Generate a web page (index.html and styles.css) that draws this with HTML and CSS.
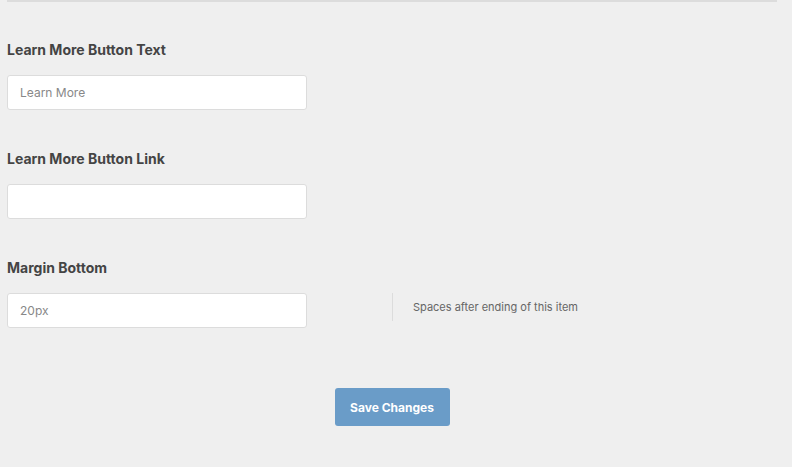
FILE: index.html
```html
<!DOCTYPE html>
<html lang="en">
<head>
  <title>Item Settings</title>
  <link rel="stylesheet" href="styles.css">
</head>
<body>
  <div class="settings">
    <div class="field">
      <label class="field-label" for="btnText">Learn More Button Text</label>
      <div class="field-row">
        <input id="btnText" class="field-input" type="text" placeholder="Learn More">
      </div>
    </div>

    <div class="field">
      <label class="field-label" for="btnLink">Learn More Button Link</label>
      <div class="field-row">
        <input id="btnLink" class="field-input" type="text">
      </div>
    </div>

    <div class="field">
      <label class="field-label" for="marginBottom">Margin Bottom</label>
      <div class="field-row">
        <input id="marginBottom" class="field-input" type="text" placeholder="20px">
        <p class="field-desc">Spaces after ending of this item</p>
      </div>
    </div>

    <div class="actions">
      <button class="save-btn" type="button">Save Changes</button>
    </div>
  </div>
</body>
</html>
```

FILE: styles.css
```css
body {
  font-family: Inter, Roboto, 'Liberation Sans', sans-serif;
  margin: 0;
  background: #efefef;
  color: #444;
}

.settings {
  margin: 0 15px 0 7px;
  border-top: 2px solid #dcdcdc;
  padding-top: 40px;
}

.field {
  margin-bottom: 41px;
}

.field-label {
  display: block;
  font-size: 14px;
  font-weight: bold;
  line-height: 16px;
  color: #444;
  margin-bottom: 17px;
}

.field-row {
  display: flex;
  align-items: flex-start;
}

.field-input {
  width: 300px;
  height: 35px;
  box-sizing: border-box;
  padding: 0 12px;
  border: 1px solid #dcdcdc;
  border-radius: 3px;
  background: #fff;
  font-family: inherit;
  font-size: 12px;
  color: #555;
}

.field-input::placeholder {
  color: #888;
}

.field-desc {
  margin: 0 0 0 85px;
  height: 28px;
  line-height: 28px;
  padding-left: 20px;
  border-left: 1px solid #dcdcdc;
  font-size: 11px;
  color: #666;
}

.actions {
  text-align: center;
  padding-top: 19px;
}

.save-btn {
  width: 115px;
  height: 38px;
  background-color: #6a9cc8;
  color: white;
  border: none;
  border-radius: 3px;
  font-family: inherit;
  font-size: 12px;
  font-weight: bold;
  cursor: pointer;
}
```
